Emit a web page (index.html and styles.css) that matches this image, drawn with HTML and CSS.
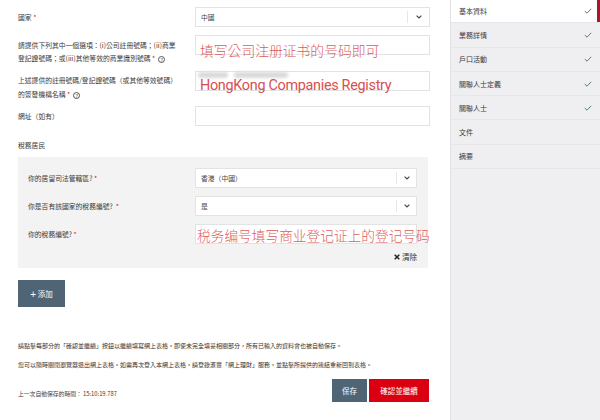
FILE: index.html
```html
<!DOCTYPE html>
<html lang="zh-Hant">
<head>
<meta charset="utf-8">
<title>基本資料</title>
<link rel="stylesheet" href="styles.css">
</head>
<body>
<div class="page">
  <main class="form">
    <div class="row row-first">
      <label class="label label-single">國家 <span class="req">*</span></label>
      <div class="select">
        <span class="select-value">中國</span>
        <span class="select-arrow"><svg width="6" height="4" viewBox="0 0 6 4"><path d="M0.6 0.6 L3 3 L5.4 0.6" fill="none" stroke="#444" stroke-width="1.1"/></svg></span>
      </div>
    </div>

    <div class="row">
      <label class="label label-tall">請提供下列其中一個選項：(i)公司註冊號碼；(ii)商業登記證號碼；或(iii)其他等效的商業識別號碼 <span class="req">*</span><span class="help">?</span></label>
      <div class="input">
        <span class="note note-cjk note-reg">填写公司注册证书的号码即可</span>
      </div>
    </div>

    <div class="row">
      <label class="label label-tall">上述提供的註冊號碼/登記證號碼（或其他等效號碼）的簽發機構名稱 <span class="req">*</span><span class="help">?</span></label>
      <div class="input">
        <span class="smudge smudge-a"></span>
        <span class="smudge smudge-b"></span>
        <span class="note note-latin">HongKong Companies Registry</span>
      </div>
    </div>

    <div class="row">
      <label class="label label-single">網址（如有）</label>
      <div class="input"></div>
    </div>

    <h2 class="tax-title">稅務居民</h2>
    <section class="tax-panel">
      <div class="tax-row">
        <label class="label label-single">你的居留司法管轄區? <span class="req">*</span></label>
        <div class="select">
          <span class="select-value">香港（中國）</span>
          <span class="select-arrow select-arrow-sm"><svg width="6" height="4" viewBox="0 0 6 4"><path d="M0.6 0.6 L3 3 L5.4 0.6" fill="none" stroke="#444" stroke-width="1.1"/></svg></span>
        </div>
      </div>
      <div class="tax-row">
        <label class="label label-single">你是否有該國家的稅務編號? &nbsp;<span class="req">*</span></label>
        <div class="select">
          <span class="select-value">是</span>
          <span class="select-arrow select-arrow-sm"><svg width="6" height="4" viewBox="0 0 6 4"><path d="M0.6 0.6 L3 3 L5.4 0.6" fill="none" stroke="#444" stroke-width="1.1"/></svg></span>
        </div>
      </div>
      <div class="tax-row">
        <label class="label label-single">你的稅務編號? <span class="req">*</span></label>
        <div class="input">
          <span class="note note-cjk note-tax">税务编号填写商业登记证上的登记号码</span>
        </div>
      </div>
      <div class="clear">
        <svg width="6" height="6" viewBox="0 0 6 6"><path d="M0.7 0.7 L5.3 5.3 M5.3 0.7 L0.7 5.3" stroke="#222" stroke-width="1.5"/></svg>
        <span>清除</span>
      </div>
    </section>

    <button class="btn btn-add" type="button"><span class="plus">+</span> 添加</button>

    <div class="notes">
      <p>請點擊每部分的「確認並繼續」按鈕以繼續填寫網上表格。即使未完全填妥相關部分，所有已輸入的資料會也被自動保存。</p>
      <p>您可以隨時關閉瀏覽器退出網上表格。如需再次登入本網上表格，請登錄滙豐「網上理財」服務，並點擊所提供的連結重新回到表格。</p>
    </div>

    <div class="footer">
      <span class="saved">上一次自動保存的時間： 15:10:19.787</span>
      <div class="actions">
        <button class="btn btn-save" type="button">保存</button>
        <button class="btn btn-next" type="button">確認並繼續</button>
      </div>
    </div>
  </main>

  <nav class="steps">
    <div class="step step-active"><span>基本資料</span><svg class="tick" width="8" height="6" viewBox="0 0 8 6"><path d="M0.8 3.1 L3 5.2 L7.2 0.8" fill="none" stroke="#5d7b78" stroke-width="1"/></svg></div>
    <div class="step"><span>業務詳情</span><svg class="tick" width="8" height="6" viewBox="0 0 8 6"><path d="M0.8 3.1 L3 5.2 L7.2 0.8" fill="none" stroke="#5d7b78" stroke-width="1"/></svg></div>
    <div class="step"><span>戶口活動</span><svg class="tick" width="8" height="6" viewBox="0 0 8 6"><path d="M0.8 3.1 L3 5.2 L7.2 0.8" fill="none" stroke="#5d7b78" stroke-width="1"/></svg></div>
    <div class="step"><span>關聯人士定義</span><svg class="tick" width="8" height="6" viewBox="0 0 8 6"><path d="M0.8 3.1 L3 5.2 L7.2 0.8" fill="none" stroke="#5d7b78" stroke-width="1"/></svg></div>
    <div class="step"><span>關聯人士</span><svg class="tick" width="8" height="6" viewBox="0 0 8 6"><path d="M0.8 3.1 L3 5.2 L7.2 0.8" fill="none" stroke="#5d7b78" stroke-width="1"/></svg></div>
    <div class="step"><span>文件</span></div>
    <div class="step"><span>摘要</span></div>
  </nav>
</div>
</body>
</html>
```

FILE: styles.css
```css
* {
  box-sizing: border-box;
  margin: 0;
  padding: 0;
}

html,
body {
  width: 600px;
  height: 420px;
  overflow: hidden;
  background: #fff;
}

body {
  font-family: "Noto Sans CJK TC", "Noto Sans", sans-serif;
  font-size: 6.8px;
  color: #3a3a3a;
}

.page {
  display: grid;
  grid-template-columns: 450px 150px;
  height: 420px;
}

/* ---------- form column ---------- */

.form {
  padding: 7px 0 0 18px;
}

.row {
  display: grid;
  grid-template-columns: 177px 235px;
  align-items: start;
  margin-bottom: 5px;
}

.row-first {
  margin-bottom: 8px;
}

.label {
  line-height: 13.5px;
  padding-right: 15px;
}

.label-single {
  line-height: 20px;
  white-space: nowrap;
}

.label-tall {
  padding-top: 3.5px;
}

.req {
  color: #db0011;
}

.help {
  display: inline-block;
  width: 7px;
  height: 7px;
  margin-left: 3px;
  border: 1px solid #555;
  border-radius: 50%;
  font-size: 5px;
  line-height: 5px;
  text-align: center;
  vertical-align: -1px;
  color: #444;
}

.select,
.input {
  position: relative;
  height: 20px;
  border: 1px solid #e3e3e3;
  background: #fff;
}

.select {
  display: flex;
  align-items: center;
}

.select-value {
  flex: 1;
  padding-left: 5px;
  color: #444;
}

.select-arrow {
  width: 22px;
  height: 12px;
  border-left: 1px solid #e6e6e6;
  display: flex;
  align-items: center;
  justify-content: center;
}

.select-arrow-sm {
  width: 20px;
}

/* handwritten hints laid over the inputs */
.note {
  position: absolute;
  white-space: nowrap;
  color: #d84f4f;
  line-height: 16px;
}

.note-cjk {
  font-family: "Noto Sans CJK SC", sans-serif;
  font-weight: 300;
  color: #dc5c5c;
}

.note-reg {
  left: 4px;
  top: 6px;
  font-size: 13.8px;
}

.note-latin {
  left: 4px;
  top: 6px;
  font-family: Roboto, "Liberation Sans", sans-serif;
  font-size: 14.4px;
  letter-spacing: -0.3px;
}

.note-tax {
  left: 1px;
  top: 2px;
  font-size: 13.7px;
}

.smudge {
  position: absolute;
  top: 0;
  height: 6px;
  background: #dadada;
  filter: blur(1.5px);
  border-radius: 3px;
}

.smudge-a {
  left: 2px;
  width: 30px;
}

.smudge-b {
  left: 38px;
  width: 54px;
}

/* ---------- tax residency ---------- */

.tax-title {
  margin: 12px 0 5px;
  font-size: 6.8px;
  font-weight: normal;
  line-height: 14px;
}

.tax-panel {
  width: 410px;
  background: #f3f3f3;
  padding: 11px 11px 5px 10px;
  display: flex;
  flex-direction: column;
  gap: 8px;
}

.tax-row {
  display: grid;
  grid-template-columns: 167px 222px;
  align-items: start;
}

.clear {
  margin-top: -1px;
  display: flex;
  justify-content: flex-end;
  align-items: center;
  gap: 2px;
  line-height: 12px;
  font-size: 7.5px;
  color: #333;
}

/* ---------- buttons & footer ---------- */

.btn {
  border: none;
  color: #fff;
  font-family: inherit;
  cursor: pointer;
}

.btn-add {
  display: block;
  margin-top: 12px;
  width: 47px;
  height: 27px;
  background: #4f6576;
  font-size: 7.5px;
}

.plus {
  font-size: 10px;
  font-family: "Liberation Sans", sans-serif;
  vertical-align: -1px;
}

.notes {
  margin-top: 34px;
  font-size: 6px;
  line-height: 10px;
  color: #333;
}

.notes p {
  margin-bottom: 9px;
  white-space: nowrap;
}

.footer {
  margin-top: 4px;
  width: 411px;
  display: flex;
  justify-content: space-between;
  align-items: flex-end;
}

.saved {
  font-size: 5.8px;
  line-height: 10px;
  margin-bottom: 3px;
}

.actions {
  display: flex;
  gap: 2px;
}

.btn-save {
  width: 35px;
  height: 23px;
  background: #4f6576;
  font-size: 7.5px;
}

.btn-next {
  width: 60px;
  height: 23px;
  background: #db0011;
  font-size: 7.5px;
}

/* ---------- steps sidebar ---------- */

.steps {
  background: #efeef1;
  border-left: 1px solid #e2e2e6;
}

.step {
  position: relative;
  height: 24.3px;
  padding: 0 8px 0 8px;
  border-bottom: 1px solid #e7e7ea;
  display: flex;
  align-items: center;
  justify-content: space-between;
  font-size: 7px;
  color: #3a3a3a;
}

.step-active {
  height: 23.3px;
  background: #fff;
}

.step-active::after {
  content: "";
  position: absolute;
  right: 0;
  top: 0;
  bottom: 0;
  width: 3px;
  background: #a8172f;
}
```
